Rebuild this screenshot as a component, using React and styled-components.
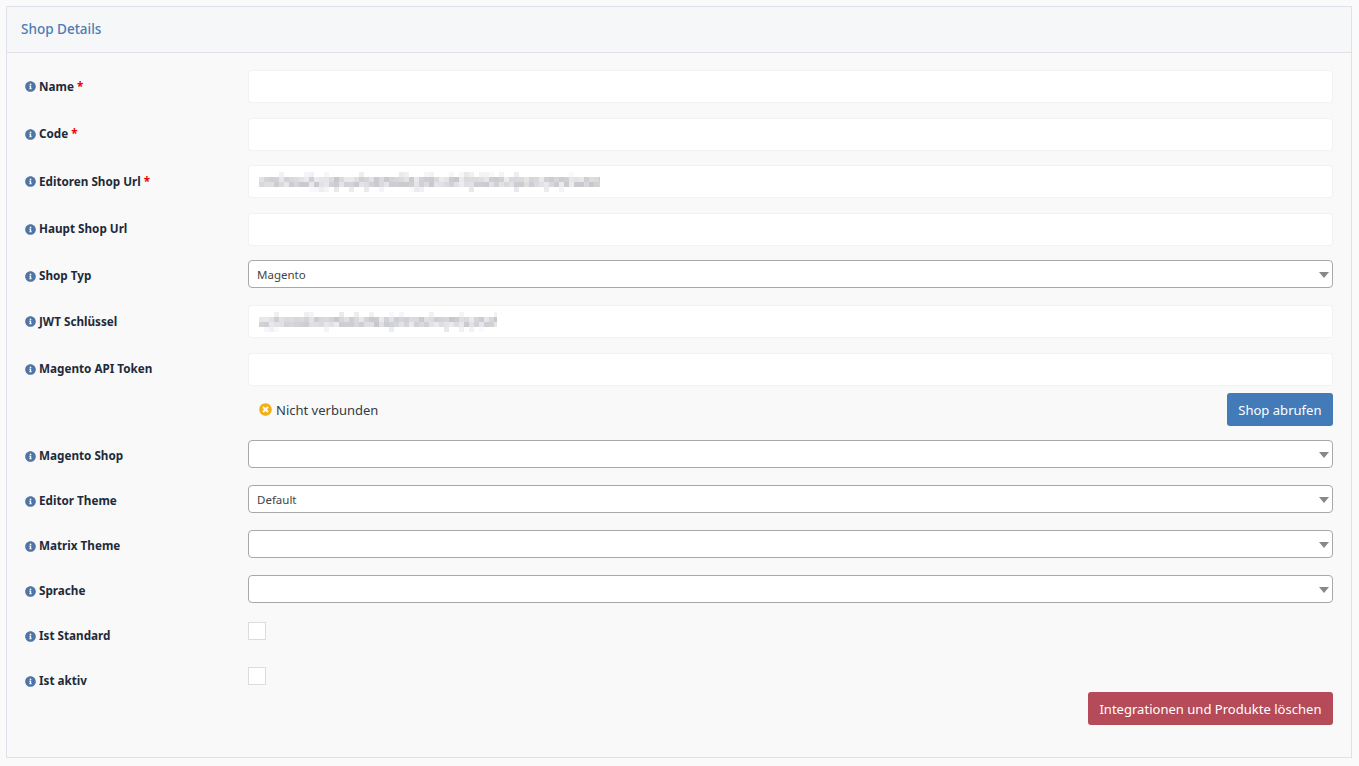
import React from 'react'
import styled, { createGlobalStyle } from 'styled-components'
import { FaInfoCircle, FaTimesCircle } from 'react-icons/fa'

const GlobalStyle = createGlobalStyle`
  html, body {
    margin: 0;
    padding: 0;
    background: #fafafa;
    font-family: "Noto Sans", "Open Sans", sans-serif;
    color: #212529;
  }
  * { box-sizing: border-box; }
`

const Page = styled.div`
  padding: 6px 6px 8px 6px;
  width: 1359px;
  height: 766px;
  overflow: hidden;
`

const Panel = styled.section`
  width: 1346px;
  height: 752px;
  border: 1px solid #e0e1e8;
  background: #f9f9f9;
`

const PanelHeader = styled.header`
  height: 46px;
  padding: 0 14px 2px;
  display: flex;
  align-items: center;
  background: #f6f7f9;
  border-bottom: 1px solid #e0e1e8;
  font-size: 13.5px;
  font-weight: 500;
  color: #4a7cb5;
`

const PanelBody = styled.div`
  padding: 17px 19px 0 18px;
`

const Row = styled.div`
  display: grid;
  grid-template-columns: 223px 1085px;
  align-items: start;
  height: ${(p) => (p.$tall ? '33px' : '30px')};
  margin-bottom: ${(p) => (p.$tall ? '14.5px' : '15px')};
`

const Label = styled.label`
  display: flex;
  align-items: center;
  gap: 3px;
  height: ${(p) => (p.$tall ? '33px' : '32px')};
  font-size: 11.7px;
  font-weight: 700;
  color: #212a3a;
`

const LabelText = styled.span`
  margin-top: -2px;
`

const InfoIcon = styled(FaInfoCircle)`
  width: 11px;
  height: 11px;
  color: #4f74a6;
  flex: none;
`

const Required = styled.span`
  color: #f00000;
`

const TextInput = styled.div`
  position: relative;
  height: 33px;
  background: #fff;
  border: 1px solid #f2f2f3;
  border-radius: 3px;
`

const Mosaic = styled.svg`
  position: absolute;
  left: 10px;
  top: 6px;
`

const SelectBox = styled.div`
  position: relative;
  height: 28px;
  display: flex;
  align-items: center;
  padding: 1px 0 0 8px;
  background: #fff;
  border: 1px solid #a8a8a8;
  border-radius: 4px;
  font-size: 11.5px;
  color: #444;

  &::after {
    content: '';
    position: absolute;
    right: 3px;
    top: 11px;
    border-left: 5.5px solid transparent;
    border-right: 5.5px solid transparent;
    border-top: 6px solid #888;
  }
`

const Checkbox = styled.span`
  display: block;
  width: 18px;
  height: 18px;
  margin-top: 2px;
  background: #fff;
  border: 1px solid #dcdcdc;
`

const StatusRow = styled.div`
  display: flex;
  align-items: center;
  justify-content: space-between;
  margin: -7px 0 14px 223px;
  width: 1085px;
  padding-left: 11px;
`

const Status = styled.div`
  display: flex;
  align-items: center;
  gap: 4px;
  font-size: 13px;
  color: #333b47;
`

const StatusIcon = styled(FaTimesCircle)`
  width: 13px;
  height: 13px;
  color: #f0b01e;
`

const Button = styled.button`
  height: 33px;
  padding: 0 11.5px;
  border: 0;
  border-radius: 3px;
  font-family: inherit;
  font-size: 13.05px;
  color: #fff;
  background: ${(p) => (p.$danger ? '#b54a58' : '#437ab8')};
`

const Footer = styled.div`
  display: flex;
  justify-content: flex-end;
  width: 1308px;
  margin-top: -18px;
`

const seeded = (seed) => {
  let s = seed
  return () => {
    s = (s * 16807) % 2147483647
    return s / 2147483647
  }
}

const MosaicText = ({ width, height, seed }) => {
  const rand = seeded(seed)
  const cols = Math.ceil(width / 5)
  const rows = Math.ceil(height / 5)
  const cells = []
  for (let y = 0; y < rows; y++) {
    for (let x = 0; x < cols; x++) {
      const mid = y > 0 && y < rows - 1
      if (!mid && rand() < 0.75) continue
      const v = Math.round(mid ? 200 + rand() * 35 : 232 + rand() * 18)
      const tint = Math.round(rand() * 8)
      cells.push(
        <rect key={`${x}-${y}`} x={x * 5} y={y * 5} width="5" height="5" fill={`rgb(${v},${v},${v + tint})`} />
      )
    }
  }
  return (
    <Mosaic width={width} height={height} aria-hidden="true">
      {cells}
    </Mosaic>
  )
}

const FieldLabel = ({ children, required, tall }) => (
  <Label $tall={tall}>
    <InfoIcon />
    <LabelText>
      {children}
      {required && <Required> *</Required>}
    </LabelText>
  </Label>
)

const InputRow = ({ label, required, blur }) => (
  <Row $tall>
    <FieldLabel required={required} tall>{label}</FieldLabel>
    <TextInput>{blur && <MosaicText {...blur} />}</TextInput>
  </Row>
)

const SelectRow = ({ label, value }) => (
  <Row>
    <FieldLabel>{label}</FieldLabel>
    <SelectBox>{value}</SelectBox>
  </Row>
)

const CheckRow = ({ label }) => (
  <Row>
    <FieldLabel>{label}</FieldLabel>
    <Checkbox />
  </Row>
)

const App = () => (
  <Page>
    <GlobalStyle />
    <Panel>
      <PanelHeader>Shop Details</PanelHeader>
      <PanelBody>
        <InputRow label="Name" required />
        <InputRow label="Code" required />
        <InputRow label="Editoren Shop Url" required blur={{ width: 341, height: 20, seed: 4711 }} />
        <InputRow label="Haupt Shop Url" />
        <SelectRow label="Shop Typ" value="Magento" />
        <InputRow label="JWT Schlüssel" blur={{ width: 238, height: 20, seed: 1234 }} />
        <InputRow label="Magento API Token" />
        <StatusRow>
          <Status>
            <StatusIcon />
            Nicht verbunden
          </Status>
          <Button>Shop abrufen</Button>
        </StatusRow>
        <SelectRow label="Magento Shop" />
        <SelectRow label="Editor Theme" value="Default" />
        <SelectRow label="Matrix Theme" />
        <SelectRow label="Sprache" />
        <CheckRow label="Ist Standard" />
        <CheckRow label="Ist aktiv" />
        <Footer>
          <Button $danger>Integrationen und Produkte löschen</Button>
        </Footer>
      </PanelBody>
    </Panel>
  </Page>
)

export default App
